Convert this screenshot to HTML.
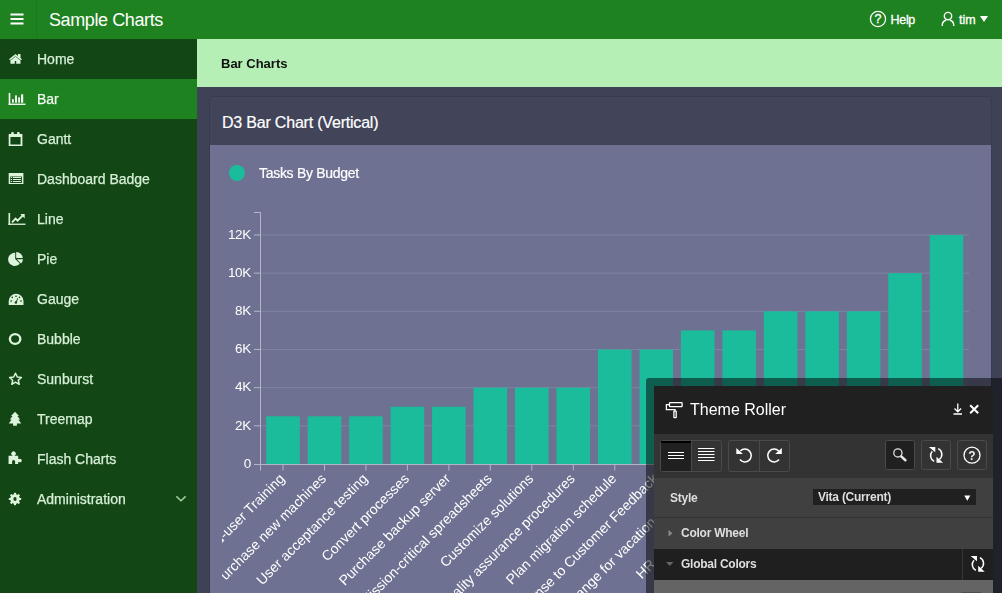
<!DOCTYPE html>
<html><head><meta charset="utf-8">
<style>
*{margin:0;padding:0;box-sizing:border-box}
html,body{width:1002px;height:593px;overflow:hidden;background:#3f4257;font-family:"Liberation Sans",sans-serif}
.abs{position:absolute}
#hdr{left:0;top:0;width:1002px;height:39px;background:#1f8221}
#hdr .div{left:36px;top:0;width:1px;height:39px;background:#1a7a1c}
#hdr .title{left:49px;top:8.5px;font-size:18px;letter-spacing:-0.4px;color:#fff;line-height:22px;white-space:nowrap}
#hdr .help{left:890.5px;top:12.3px;font-size:12.5px;letter-spacing:-0.3px;color:#fff;line-height:16px;-webkit-text-stroke:0.3px #fff}
#hdr .user{left:959px;top:12px;font-size:12.5px;color:#fff;line-height:16px;-webkit-text-stroke:0.3px #fff}
#side{left:0;top:39px;width:197px;height:554px;background:#134615}
.item{position:absolute;left:0;width:197px;height:40px}
.item .t{position:absolute;left:37px;top:11px;font-size:14px;line-height:18px;color:#d6efd6;white-space:nowrap;-webkit-text-stroke:0.25px #d6efd6;will-change:transform}
.item svg{position:absolute;left:0;top:0}
.item.on{background:#1f8221}
.item.on .t{color:#fff}
#bc{left:197px;top:39px;width:805px;height:48px;background:#b5efb5}
#bc .t{left:24px;top:16.5px;font-size:13px;font-weight:bold;color:#111;line-height:16px;will-change:transform}
#reg{left:209px;top:96px;width:783px;height:510px;background:#42455a;border:1px solid #393b4e;border-radius:3px}
#reg .t{left:12px;top:15.5px;font-size:16px;letter-spacing:-0.2px;color:#fff;-webkit-text-stroke:0.2px #fff;line-height:20px;white-space:nowrap}
#chart{left:210px;top:145px;width:781px;height:448px;background:#6e7191}
#tr{left:0;top:0;width:1002px;height:593px}
.tr-t{font-size:16px;color:#fff;line-height:20px;white-space:nowrap}
.lbl{will-change:transform;font-size:12px;font-weight:bold;color:#dedede;line-height:14px;letter-spacing:-0.25px;white-space:nowrap}
</style></head><body>
<div id="hdr" class="abs">
  <div class="abs div"></div>
  <svg class="abs" style="left:0;top:0" width="40" height="39">
    <rect x="10.5" y="13.5" width="13" height="2" fill="#fff"/>
    <rect x="10.5" y="18" width="13" height="2" fill="#fff"/>
    <rect x="10.5" y="22.5" width="13" height="2" fill="#fff"/>
  </svg>
  <div class="abs title">Sample Charts</div>
  <svg class="abs" style="left:866px;top:8px" width="24" height="24">
    <circle cx="12" cy="11" r="7.6" fill="none" stroke="#fff" stroke-width="1.3"/>
    <text x="12" y="15.4" font-size="12.5" fill="#fff" text-anchor="middle" font-family="Liberation Sans" stroke="#fff" stroke-width="0.3">?</text>
  </svg>
  <div class="abs help">Help</div>
  <svg class="abs" style="left:938px;top:10px" width="20" height="20">
    <circle cx="10" cy="6.1" r="3.7" fill="none" stroke="#fff" stroke-width="1.4"/>
    <path d="M4.2 16 C4.2 12.8 5.9 10.8 8 10.3 M15.8 16 C15.8 12.8 14.1 10.8 12 10.3" fill="none" stroke="#fff" stroke-width="1.4"/>
  </svg>
  <div class="abs user">tim</div>
  <svg class="abs" style="left:978px;top:14px" width="12" height="10">
    <path d="M2 2 L10 2 L6 8 Z" fill="#fff"/>
  </svg>
</div>

<div id="side" class="abs">
 <div class="item" style="top:0">
  <svg width="30" height="40" fill="#dcf3dc"><path d="M9 20.2 L15.5 15 L18 17 V15 H20.5 V19 L22 20.2 L21.2 21 L20.5 20.5 V24.8 H16.2 V22 H14.8 V24.8 H10.4 V20.5 L9.8 21 Z"/><path d="M10.6 21.2 L15.5 17.3 L20.4 21.2" fill="none" stroke="#134615" stroke-width="0.6"/></svg>
  <div class="t">Home</div></div>
 <div class="item on" style="top:40px">
  <svg width="30" height="40" fill="#fff"><rect x="8.7" y="14" width="1.6" height="12"/><rect x="8.7" y="24.6" width="16.8" height="1.3"/><rect x="12" y="20.2" width="1.8" height="3.5"/><rect x="15.1" y="16.4" width="1.8" height="7.3"/><rect x="18.2" y="18.3" width="1.7" height="5.4"/><rect x="21" y="15.4" width="2.2" height="8.3"/></svg>
  <div class="t">Bar</div></div>
 <div class="item" style="top:80px">
  <svg width="30" height="40" fill="#dcf3dc"><path fill-rule="evenodd" d="M8.7 15 H22.4 V27 H8.7 Z M10.4 18.1 V25.5 H20.6 V18.1 Z"/><rect x="11.2" y="13" width="2.6" height="3" rx="1"/><rect x="17" y="13" width="2.7" height="3" rx="1"/></svg>
  <div class="t">Gantt</div></div>
 <div class="item" style="top:120px">
  <svg width="30" height="40" fill="#dcf3dc"><path fill-rule="evenodd" d="M8.7 14 H23.4 V25 H8.7 Z M10.2 17.5 V24 H21.9 V17.5 Z"/><rect x="10.9" y="18" width="1.2" height="1"/><rect x="13" y="18" width="8" height="1"/><rect x="10.9" y="20" width="1.2" height="1"/><rect x="13" y="20" width="8" height="1"/><rect x="10.9" y="22" width="1.2" height="1"/><rect x="13" y="22" width="8" height="1"/></svg>
  <div class="t">Dashboard Badge</div></div>
 <div class="item" style="top:160px">
  <svg width="30" height="40" fill="#dcf3dc"><rect x="8.5" y="14" width="1.6" height="12"/><rect x="8.5" y="24.6" width="17" height="1.3"/><path d="M12 23.3 L15.6 19.7 L17.6 21.7 L22.6 16.7" fill="none" stroke="#dcf3dc" stroke-width="1.9" stroke-linejoin="miter"/><path d="M20.3 15 H24.7 V19.4 Z"/></svg>
  <div class="t">Line</div></div>
 <div class="item" style="top:200px">
  <svg width="30" height="40" fill="#dcf3dc"><path d="M15.2 13.8 V20 L19.8 24.6 A6.6 6.6 0 1 1 15.2 13.8 Z"/><path d="M16.2 13 A6.6 6.6 0 0 1 22.8 19 H16.2 Z"/><path d="M16.8 20.3 H23 A6.6 6.6 0 0 1 21 24.5 Z"/></svg>
  <div class="t">Pie</div></div>
 <div class="item" style="top:240px">
  <svg width="30" height="40"><path d="M8.7 26 V22 A7.4 7.2 0 0 1 23.5 22 V26 Z" fill="#dcf3dc"/><g fill="#134615"><rect x="15.3" y="16.6" width="1.4" height="1.4"/><circle cx="12.3" cy="18.4" r="0.8"/><circle cx="19.4" cy="18.4" r="0.8"/><rect x="10.5" y="21.3" width="1.4" height="1.4"/><rect x="20.3" y="21.3" width="1.4" height="1.4"/><circle cx="15.9" cy="23.5" r="1.2"/><path d="M15.6 23 L17.6 19 L18.2 19.2 L16.6 23.4 Z"/></g></svg>
  <div class="t">Gauge</div></div>
 <div class="item" style="top:280px">
  <svg width="30" height="40"><ellipse cx="15.1" cy="20" rx="5.2" ry="4.9" fill="none" stroke="#dcf3dc" stroke-width="2.4"/></svg>
  <div class="t">Bubble</div></div>
 <div class="item" style="top:320px">
  <svg width="30" height="40"><path d="M15.5 14.2 L17.3 18 L21.4 18.4 L18.3 21.2 L19.2 25.3 L15.5 23.2 L11.8 25.3 L12.7 21.2 L9.6 18.4 L13.7 18 Z" fill="none" stroke="#dcf3dc" stroke-width="1.5" stroke-linejoin="round"/></svg>
  <div class="t">Sunburst</div></div>
 <div class="item" style="top:360px">
  <svg width="30" height="40" fill="#dcf3dc"><path d="M15 12.8 L19 17 L17.4 17 L20.2 20.5 L18.4 20.5 L21.2 24.5 L16.9 24.5 V26.8 H13.1 V24.5 L8.8 24.5 L11.6 20.5 L9.8 20.5 L12.6 17 L11 17 Z"/></svg>
  <div class="t">Treemap</div></div>
 <div class="item" style="top:400px">
  <svg width="30" height="40" fill="#dcf3dc"><path d="M8.55 16.75 H12.4 V16.3 A2.25 2.1 0 1 1 14.7 16.3 V16.75 H18.2 V20.1 H19.1 A1.75 1.7 0 1 1 19.1 23 H18.2 V25 H15.1 V22.6 A1.5 1.5 0 0 0 12.1 22.6 V25 H8.55 Z"/></svg>
  <div class="t">Flash Charts</div></div>
 <div class="item" style="top:440px">
  <svg width="30" height="40"><g transform="translate(15,20)" fill="#dcf3dc"><circle r="4.8"/><g id="teeth"><rect x="-1.1" y="-6.2" width="2.2" height="2.5" rx="0.6"/><rect x="-1.1" y="3.7" width="2.2" height="2.5" rx="0.6"/><rect x="-6.2" y="-1.1" width="2.5" height="2.2" rx="0.6"/><rect x="3.7" y="-1.1" width="2.5" height="2.2" rx="0.6"/></g><use href="#teeth" transform="rotate(45)"/></g><ellipse cx="15" cy="20" rx="1.6" ry="2" fill="#134615"/></svg>
  <div class="t">Administration</div>
  <svg style="left:170px" width="24" height="40"><path d="M6.4 17.4 L11 21.8 L15.6 17.4" fill="none" stroke="#9ccf9c" stroke-width="1.5"/></svg>
 </div>
</div>

<div id="bc" class="abs"><div class="abs t">Bar Charts</div></div>

<div id="reg" class="abs"><div class="abs t">D3 Bar Chart (Vertical)</div></div>
<div id="chart" class="abs"></div>

<svg class="abs" style="left:0;top:0" width="1002" height="593" font-family="Liberation Sans">
 <defs><clipPath id="cc"><rect x="222" y="145" width="769" height="448"/></clipPath></defs>
 <circle cx="237" cy="173" r="8" fill="#1abc9c"/>
 <text x="259" y="178" font-size="14" letter-spacing="-0.3" fill="#fff" stroke="#fff" stroke-width="0.2">Tasks By Budget</text>
 <g stroke="#8084a2" stroke-width="1" fill="none">
  <path d="M260 425.83H969M260 387.66H969M260 349.49H969M260 311.32H969M260 273.15H969M260 234.98H969"/>
 </g>
 <g fill="#1abc9c">
<rect x="266.20" y="416.29" width="33.6" height="47.71"/><rect x="307.67" y="416.29" width="33.6" height="47.71"/><rect x="349.14" y="416.29" width="33.6" height="47.71"/><rect x="390.61" y="406.75" width="33.6" height="57.26"/><rect x="432.08" y="406.75" width="33.6" height="57.26"/><rect x="473.55" y="387.66" width="33.6" height="76.34"/><rect x="515.02" y="387.66" width="33.6" height="76.34"/><rect x="556.49" y="387.66" width="33.6" height="76.34"/><rect x="597.96" y="349.49" width="33.6" height="114.51"/><rect x="639.43" y="349.49" width="33.6" height="114.51"/><rect x="680.90" y="330.40" width="33.6" height="133.59"/><rect x="722.37" y="330.40" width="33.6" height="133.59"/><rect x="763.84" y="311.32" width="33.6" height="152.68"/><rect x="805.31" y="311.32" width="33.6" height="152.68"/><rect x="846.78" y="311.32" width="33.6" height="152.68"/><rect x="888.25" y="273.15" width="33.6" height="190.85"/><rect x="929.72" y="234.98" width="33.6" height="229.02"/>
 </g>
 <g stroke="#b4b6c7" stroke-width="1" fill="none">
  <path d="M254 212.5H260.5V470.5M254 425.83H260M254 387.66H260M254 349.49H260M254 311.32H260M254 273.15H260M254 234.98H260M254 464.5H969"/>
  <path d="M283.0 464.5V470.5M324.5 464.5V470.5M365.9 464.5V470.5M407.4 464.5V470.5M448.9 464.5V470.5M490.3 464.5V470.5M531.8 464.5V470.5M573.3 464.5V470.5M614.8 464.5V470.5M656.2 464.5V470.5M697.7 464.5V470.5M739.2 464.5V470.5M780.6 464.5V470.5M822.1 464.5V470.5M863.6 464.5V470.5M905.0 464.5V470.5M946.5 464.5V470.5"/>
 </g>
 <g font-size="13.5" letter-spacing="-0.3" fill="#fff" text-anchor="end">
  <text x="251" y="238.7">12K</text><text x="251" y="276.9">10K</text><text x="251" y="315.0">8K</text><text x="251" y="353.2">6K</text><text x="251" y="391.4">4K</text><text x="251" y="429.5">2K</text><text x="251" y="467.7">0</text>
 </g>
 <g font-size="14" fill="#fff" text-anchor="end" clip-path="url(#cc)">
  <text transform="translate(285.5,479.5) rotate(-45)">End-user Training</text>
  <text transform="translate(327.0,479.5) rotate(-45)">Purchase new machines</text>
  <text transform="translate(368.4,479.5) rotate(-45)">User acceptance testing</text>
  <text transform="translate(409.9,479.5) rotate(-45)">Convert processes</text>
  <text transform="translate(451.4,479.5) rotate(-45)">Purchase backup server</text>
  <text transform="translate(492.8,479.5) rotate(-45)">Mission-critical spreadsheets</text>
  <text transform="translate(534.3,479.5) rotate(-45)">Customize solutions</text>
  <text transform="translate(575.8,479.5) rotate(-45)">Quality assurance procedures</text>
  <text transform="translate(617.3,479.5) rotate(-45)">Plan migration schedule</text>
  <text transform="translate(658.7,479.5) rotate(-45)">Response to Customer Feedback</text>
  <text transform="translate(700.2,479.5) rotate(-45)">Arrange for vacation coverage</text>
  <text transform="translate(741.7,479.5) rotate(-45)">HR review and sign-off</text>
 </g>
</svg>

<!-- theme roller -->
<div class="abs" style="left:646px;top:378px;width:360px;height:230px;background:rgba(0,0,0,.5);border-radius:3px"></div>
<div class="abs" style="left:654px;top:386px;width:339.3px;height:207px;background:#646464">
 <div class="abs" style="left:0;top:0;width:100%;height:48px;background:#202020"></div>
 <div class="abs" style="left:0;top:48px;width:100%;height:44px;background:#333"></div>
 <div class="abs" style="left:0;top:92px;width:100%;height:40px;background:#404040;border-bottom:1px solid #333"></div>
 <div class="abs" style="left:0;top:132px;width:100%;height:31px;background:#404040"></div>
 <div class="abs" style="left:0;top:163px;width:100%;height:30.7px;background:#1f1f1f"></div>
 <div class="abs" style="left:308px;top:163px;width:1px;height:30.7px;background:#383838"></div>
</div>
<svg class="abs" style="left:0;top:0" width="1002" height="593">
 <!-- roller icon -->
 <g fill="none" stroke="#fff" stroke-width="1.3">
  <rect x="669.5" y="402.6" width="12.6" height="4" rx="0.6"/>
  <path d="M669.5 404.6 H666.4 V409.6 H675 V411"/>
  <rect x="673.9" y="411.2" width="2.3" height="6.4" rx="0.4"/>
 </g>
 <!-- download -->
 <g stroke="#fff" stroke-width="1.3" fill="none">
  <path d="M957.8 403.5 V411.5 M954.5 408.5 L957.8 411.8 L961.1 408.5 M953.5 414 H962"/>
 </g>
 <!-- close -->
 <path d="M970.2 405.2 L978.2 413.2 M978.2 405.2 L970.2 413.2" stroke="#fff" stroke-width="2"/>
 <!-- toolbar buttons -->
 <g stroke="#4a4a4a" stroke-width="1" fill="none">
  <rect x="660.5" y="440.5" width="61" height="31" rx="2"/>
  <path d="M691.5 441 V471"/>
  <rect x="728.5" y="440.5" width="61" height="31" rx="2"/>
  <path d="M759.5 441 V471"/>
  <rect x="885.5" y="440.5" width="29" height="29" rx="2" fill="#202020"/>
  <rect x="921.5" y="440.5" width="29" height="29" rx="2"/>
  <rect x="957.5" y="440.5" width="29" height="29" rx="2"/>
 </g>
 <rect x="661" y="441" width="30" height="30" fill="#202020"/>
 <rect x="661" y="441" width="30" height="2" fill="#000"/>
 <g stroke="#fff" stroke-width="1.1">
  <path d="M668 452.5 H684 M668 455.5 H684 M668 458.5 H684"/>
  <path d="M698 448.5 H714.5 M698 451.5 H714.5 M698 454.5 H714.5 M698 457.5 H714.5 M698 460.5 H714.5"/>
 </g>
 <!-- undo/redo -->
 <g fill="none" stroke="#fff" stroke-width="1.5">
  <path d="M740.3 451 A6.4 6.4 0 1 1 739.9 459.6"/>
  <path d="M778.7 451 A6.4 6.4 0 1 0 779.1 459.6"/>
 </g>
 <path d="M736.3 448.1 V454.1 H742.9 Z" fill="#fff"/>
 <path d="M781.8 448.1 V454.1 H775.2 Z" fill="#fff"/>
 <!-- search -->
 <circle cx="897.9" cy="452.9" r="4.1" fill="none" stroke="#e0e0e0" stroke-width="1.3"/>
 <path d="M901.2 456.4 L905.4 460.2" stroke="#e6e6e6" stroke-width="2.6" stroke-linecap="round"/>
 <!-- refresh -->
 <g id="refr">
 <g fill="none" stroke="#fff" stroke-width="1.5">
  <path d="M932.3 451.3 A6.4 6.4 0 0 0 934.2 461.4"/>
  <path d="M938.2 448.6 A6.4 6.4 0 0 1 939.4 459.4"/>
 </g>
 <path d="M928.9 447.05 H935.3 V452.3 Z M936.5 456.8 V462.8 H943 Z" fill="#fff"/>
 </g>
 <!-- help -->
 <circle cx="972" cy="455.2" r="8" fill="none" stroke="#fff" stroke-width="1.3"/>
 <text x="972" y="459.6" font-size="12" font-weight="bold" font-family="Liberation Sans" fill="#eee" text-anchor="middle">?</text>
 <!-- triangles -->
 <path d="M668.5 530 L672.5 533.3 L668.5 536.6 Z" fill="#8a8a8a"/>
 <path d="M666 562 H673.5 L669.75 566 Z" fill="#666"/>
 <!-- refresh 2 -->
 <use href="#refr" transform="translate(41.7,109)"/>
 <rect x="961" y="592" width="20" height="1" fill="#4e4e4e"/>
</svg>
<div class="abs tr-t" style="left:690px;top:400px">Theme Roller</div>
<div class="abs lbl" style="left:670px;top:490.8px">Style</div>
<div class="abs" style="left:813px;top:489px;width:163px;height:16px;background:#202020"></div>
<div class="abs lbl" style="left:818px;top:489.5px">Vita (Current)</div>
<svg class="abs" style="left:960px;top:490px" width="16" height="14"><path d="M4.3 5.5 H10.3 L7.3 10.8 Z" fill="#fff"/></svg>
<div class="abs lbl" style="left:681px;top:525.5px">Color Wheel</div>
<div class="abs lbl" style="left:681px;top:556.5px">Global Colors</div>
</body></html>
